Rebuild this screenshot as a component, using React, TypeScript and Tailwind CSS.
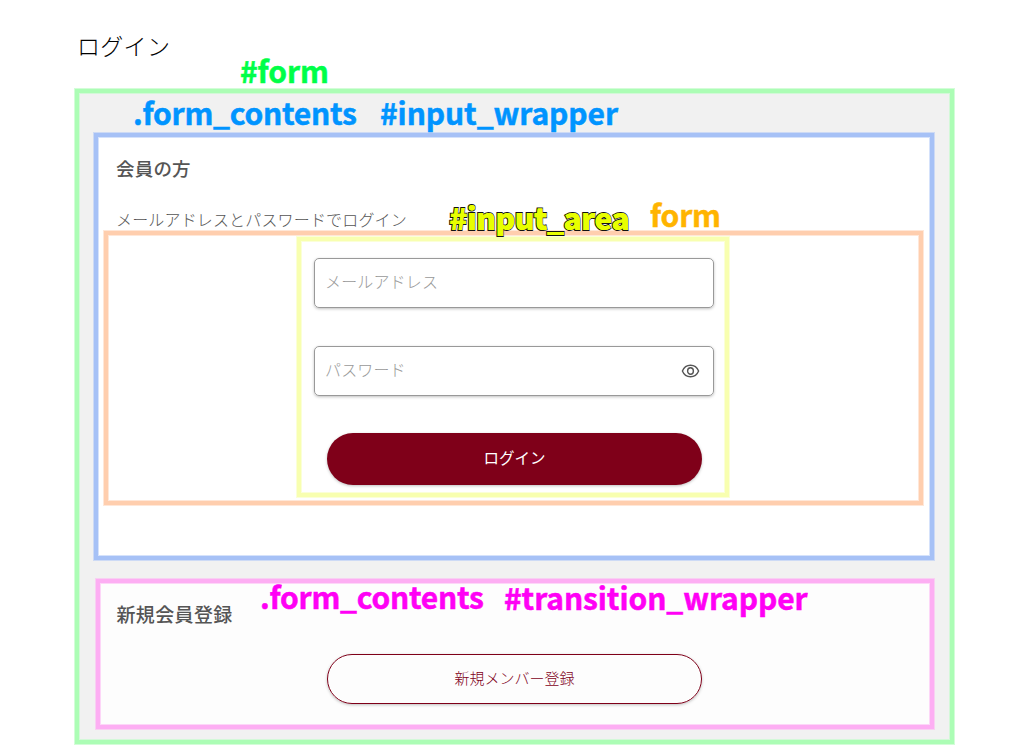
const label = "absolute whitespace-pre text-[30px] leading-[30px] font-bold [-webkit-text-stroke:0.5px_currentColor]";
const field =
  "flex h-[50px] w-[400px] items-center rounded-[5px] border border-[#999] pl-[10px] pr-[13px] shadow-[0_1px_3px_rgba(0,0,0,0.25)]";

export default function App() {
  return (
    <main className="relative flex h-[751px] w-[1027px] flex-col overflow-hidden bg-white pl-[75px] pt-[31px] font-['Noto_Sans_CJK_JP',sans-serif] text-[#555]">
      <h1 className="h-[58px] pl-[2px] text-[23px] leading-[28px] font-light tracking-[0.3px] text-black">ログイン</h1>

      <section className="flex h-[655px] w-[879px] shrink-0 flex-col gap-[19px] border-4 border-[#acfdb5] bg-[#f1f1f1] pt-[40px] pl-[15px] shadow-[0_0_0_1px_#d3fdd8,inset_0_0_0_1px_#d3f8d8]">
        <div className="flex h-[427px] w-[840px] shrink-0 flex-col border-4 border-[#a6c1f6] bg-white pt-[17px] shadow-[0_0_0_1px_#cddaf5,inset_0_0_0_1px_#d5e2fb]">
          <h2 className="pl-[18px] text-[18.5px] leading-[28px] font-medium tracking-[0.2px]">会員の方</h2>
          <p className="mt-[26px] h-[23px] pl-[18px] text-[16px] leading-[22px] font-light tracking-[0.16px]">
            メールアドレスとパスワードでログイン
          </p>
          <form className="ml-[6px] flex h-[274px] w-[819px] items-start border-4 border-[#ffceae] pt-[2px] pl-[189px] shadow-[0_0_0_1px_#ffe7d8,inset_0_0_0_1px_#ffe7d8]">
            <div className="flex h-[260px] w-[432px] flex-col border-4 border-[#f8ffb0] px-3 pt-[17px] pl-[13px] shadow-[0_0_0_1px_#fbffd8,inset_0_0_0_1px_#fbffd8]">
              <div className={field}>
                <input
                  className="min-w-0 flex-1 pb-[5px] text-[16px] font-light tracking-[0.15px] outline-none placeholder:text-[#999]"
                  placeholder="メールアドレス"
                />
              </div>
              <div className={`${field} mt-[38px]`}>
                <input
                  className="min-w-0 flex-1 pb-[5px] text-[16px] font-light tracking-[0.15px] outline-none placeholder:text-[#999]"
                  placeholder="パスワード"
                />
                <svg className="h-[14px] w-[19px]" viewBox="0 0 19 14" fill="none" stroke="#555" strokeWidth="1.4">
                  <path d="M1.4 7C3 3.1 6 1.2 9.5 1.2S16 3.1 17.6 7C16 10.9 13 12.8 9.5 12.8S3 10.9 1.4 7Z" />
                  <ellipse cx="9.5" cy="7" rx="2.9" ry="3.3" />
                </svg>
              </div>
              <button
                type="button"
                className="mt-[37px] ml-[13px] h-[52px] w-[375px] shrink-0 rounded-full bg-[#7f0019] pb-[3px] text-[15.5px] text-white shadow-[0_1px_3px_rgba(0,0,0,0.25)]"
              >
                ログイン
              </button>
            </div>
          </form>
        </div>

        <div className="ml-[2px] flex h-[150px] w-[838px] shrink-0 flex-col gap-[26px] border-4 border-[#fdaef3] bg-[#fdfdfd] pt-[17px] shadow-[0_0_0_1px_#f8d0f2,inset_0_0_0_1px_#fdd6f8]">
          <h2 className="pl-[16.5px] text-[19px] leading-[28px] font-medium tracking-[0.35px]">新規会員登録</h2>
          <button
            type="button"
            className="ml-[227px] h-[50px] w-[375px] shrink-0 rounded-full border border-[#7f0019] pb-[2px] text-[15px] font-light text-[#7f0019] shadow-[0_1px_3px_rgba(0,0,0,0.25)]"
          >
            新規メンバー登録
          </button>
        </div>
      </section>

      <span className={`${label} top-[55px] left-[240px] tracking-[-0.1px] text-[#00ff48]`}>#form</span>
      <span className={`${label} top-[97px] left-[133px] tracking-[-0.25px] text-[#0094ff]`}>.form_contents</span>
      <span className={`${label} top-[97px] left-[380px] tracking-[-0.08px] text-[#0094ff]`}>#input_wrapper</span>
      <span className="absolute top-[202px] left-[449px] text-[30px] leading-[30px] font-black tracking-[-0.45px] whitespace-pre text-[#e8ff00] [-webkit-text-stroke:2px_#111] [paint-order:stroke_fill] [text-shadow:0.5px_0_0_#e8ff00]">
        #input_area
      </span>
      <span className={`${label} top-[199px] left-[650px] tracking-[-0.2px] text-[#ffb400]`}>form</span>
      <span className={`${label} top-[581px] left-[260px] tracking-[-0.25px] text-[#ff00f5]`}>.form_contents</span>
      <span className={`${label} top-[582px] left-[504px] tracking-[-0.08px] text-[#ff00f5]`}>#transition_wrapper</span>
    </main>
  );
}
